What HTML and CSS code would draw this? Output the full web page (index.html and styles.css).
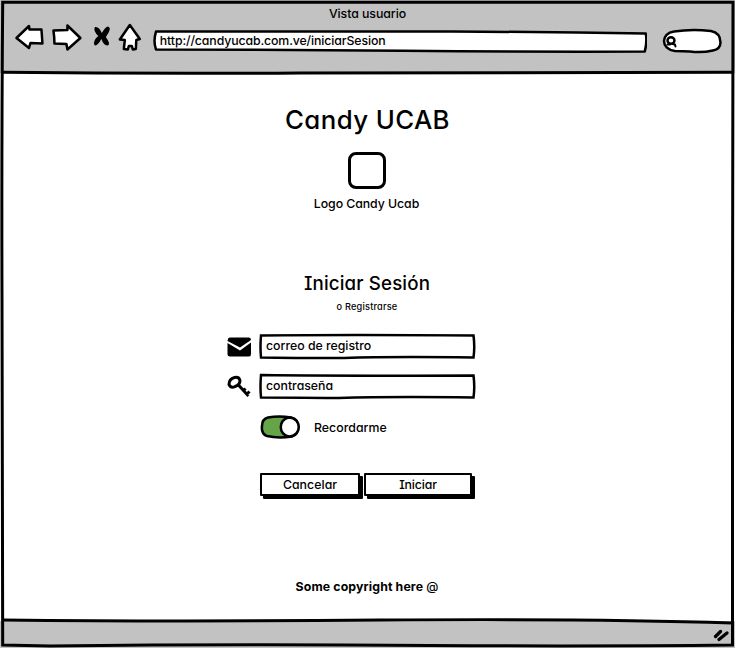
FILE: index.html
```html
<!DOCTYPE html>
<html lang="es">
<head>
<meta charset="utf-8">
<title>Vista usuario</title>
<link rel="stylesheet" href="styles.css">
</head>
<body>
<div class="window">
  <header class="chrome">
    <div class="window-title"><span class="t-window">Vista usuario</span></div>
    <div class="toolbar">
      <svg class="nav" viewBox="0 0 133 32" width="133" height="32">
        <g class="line paper">
          <path d="M1.500 16 L14 4 L14.500 7.500 L26.500 7.500 L27.500 21.500 L15.500 21 L14 26Z"/>
          <path d="M38.500 8.500 L52.500 8 L52.500 3.500 L65.500 16 L52.500 27.500 L51.500 22 L39.500 21.500 Q39.500 15 38.500 8.500Z"/>
          <path d="M115 3 L125 17 L121.500 18 L121 27 L118 27.500 L117 24 L114 24 L113 27.500 L109 27 L110 18 L105 17.500Z"/>
        </g>
        <path d="M80 5 Q84 4 87 11 Q92 3 94 5 Q97 7 91 15 Q96 22 93 23.500 Q89 24 86.500 17 Q82 25 79.500 23 Q78 18 83.500 14 Q78 9 80 5Z"/>
      </svg>
      <div class="address">
        <svg class="sketch" viewBox="0 0 495 23"><path class="line paper" d="M3 1.500 Q180 2 300 1.500 Q400 2 493.500 3.500 Q495 12 492.500 21.500 Q390 22 250 20.800 Q120 19.500 3 19.500 Q0 11 3 1.500Z"/></svg>
        <span class="t-url">http://candyucab.com.ve/iniciarSesion</span>
      </div>
      <svg class="search" viewBox="0 0 62 27" width="62" height="27">
        <path class="line paper" d="M12 4.500 Q30 1.500 49 4 Q58.500 6 58.500 15 Q59 22 51 23.500 Q40 26 28 24.500 L13 24 C-2 22 -1 6 12 4.500Z"/>
        <ellipse class="line" cx="9" cy="13.500" rx="3.500" ry="3.200"/><path class="line thin" d="M5.500 17.500 L8 17.500 M10.500 17 L13 17.500 L13.500 19.500"/>
      </svg>
    </div>
  </header>
  <main class="page">
    <h1><span class="t-title">Candy UCAB</span></h1>
    <div class="logo"></div>
    <p class="logo-name"><span class="t-logo">Logo Candy Ucab</span></p>
    <h2><span class="t-login">Iniciar Sesión</span></h2>
    <p class="register"><span class="t-register">o Registrarse</span></p>
    <form class="form">
      <div class="row">
        <svg viewBox="0 0 25 20" width="25" height="20"><path d="M1 2 Q1 .5 3 .5 H22 Q24 .5 24 3 L13 10.500 L.5 4Z M.5 6 L13 13.500 L24 5.500 V17 Q24 19.500 22 19.500 H3 Q.5 19.500 .5 17Z"/></svg>
        <div class="field">
          <svg class="sketch" viewBox="0 0 217 27"><path class="line sharp paper" d="M2 2.500 Q90 1.500 214.500 2.500 Q216 14 214.500 24.500 Q130 23.500 85 25 Q30 25 2 24.500 Q1 14 2 2.500Z"/></svg>
          <span>correo de registro</span>
        </div>
      </div>
      <div class="row">
        <svg viewBox="0 0 25 24" width="25" height="24"><path class="key" d="M7.500 2.500 Q12 1.500 13 5.500 Q13 10 8 11.500 Q4 13.500 2 9.500 Q2 4 7.500 2.500Z M11 9.500 L21.500 21 M15.500 16.500 L18.500 13.500 M19 20 L22.500 16.500"/></svg>
        <div class="field">
          <svg class="sketch" viewBox="0 0 217 27"><path class="line sharp paper" d="M2 2 Q90 3 214.500 2.500 Q216 14 214.500 24.500 Q130 23.500 80 25 Q30 24.500 2 24.500 Q1 14 2 2Z"/></svg>
          <span>contraseña</span>
        </div>
      </div>
      <div class="remember">
        <svg viewBox="0 0 40 24" width="40" height="24"><path class="line green" d="M8 2.500 Q19 .5 31 2.500 Q38 4 38.500 12 Q38 20 32 21.500 Q18 23.500 7 21 Q1 19 2 11 Q2 4 8 2.500Z"/><path class="line paper" d="M29 2.500 C18 4 18 20 29 21.500 C42 21 42 3 29 2.500Z"/></svg>
        <span class="t-remember">Recordarme</span>
      </div>
      <div class="actions">
        <div class="button cancel"><span class="t-remember">Cancelar</span></div>
        <div class="button submit"><span class="t-submit">Iniciar</span></div>
      </div>
    </form>
    <p class="copyright"><span>Some copyright here <span class="at">@</span></span></p>
  </main>
  <footer class="status">
    <svg viewBox="0 0 18 16" width="18" height="16"><path class="grip" d="M4.500 10.500 L9.500 5.500 M8 13.500 L16 7"/></svg>
  </footer>
  <svg class="frame" viewBox="0 0 735 648">
    <path class="line wide sharp" d="M2.700 2.300 H733 Q732 180 732.500 340 Q733 500 732.500 645 Q600 646.500 430 645.500 Q230 644 50 646 L2.700 645 Q3 500 2 300 Q1.500 140 2.700 2.300Z"/>
    <path class="line wide butt" d="M3 72.300 Q150 74 300 73 T732 72.300 M3 620 Q180 622 380 620 Q600 618.500 732 623"/>
  </svg>
</div>
</body>
</html>
```
FILE: styles.css
```css
* { box-sizing: border-box; }
body {
  margin: 0;
  background: #fff;
  color: #000;
  font: 450 12.3px/18px Inter, "Liberation Sans", sans-serif;
  font-feature-settings: "cv11", "cv08";
}
h1, h2, p { margin: 0; font-weight: 450; text-align: center; }
svg { display: block; }
span { white-space: nowrap; }

.window {
  position: relative;
  width: 735px;
  height: 648px;
  display: flex;
  flex-direction: column;
  overflow: hidden;
}
.frame, .sketch { position: absolute; inset: 0; width: 100%; height: 100%; }
.line { fill: none; stroke: #000; stroke-width: 2.5; stroke-linejoin: round; stroke-linecap: round; }
.sharp { stroke-linejoin: miter; }
.wide { stroke-width: 3; }
.butt { stroke-linecap: butt; }
.thin { stroke-width: 2; }
.paper { fill: #fff; }
.green { fill: #65a548; }
.key { fill: none; stroke: #000; stroke-width: 3; stroke-linejoin: round; }
.grip { fill: none; stroke: #000; stroke-width: 3.2; stroke-linecap: round; }

.chrome { height: 73px; padding: 5px 11px 0 15px; background: #c2c2c2; }
.window-title { height: 17px; padding-right: 4px; text-align: center; }
.toolbar { display: flex; align-items: flex-start; }
.nav { margin-right: 5px; }
.address { position: relative; width: 495px; height: 23px; margin-top: 8px; padding: 2px 7px; }
.address span { position: relative; }
.search { margin: 5px 0 0 15px; }

.page { height: 548px; padding-top: 29px; display: flex; flex-direction: column; align-items: center; }
h1 { font-size: 25.8px; line-height: 36px; }
.logo { width: 38px; height: 37px; margin: 14px 2px 6px 0; border: 3px solid #000; border-radius: 8px; }
.logo-name { padding-right: 2px; }
h2 { margin-top: 58px; padding-right: 1px; font-size: 18.7px; line-height: 26px; }
.register { margin-top: 4px; padding-right: 1px; font-size: 9.2px; line-height: 12px; }

.form { width: 249px; margin: 20px 32px 0 0; }
.row { display: grid; grid-template-columns: 24px 217px; column-gap: 8px; align-items: center; height: 27px; margin-bottom: 13px; }
.field { position: relative; height: 27px; padding: 4px 7px; }
.field span { position: relative; }
.remember { display: flex; align-items: center; gap: 14px; height: 24px; margin: 15px 0 0 33px; }
.remember span { padding-top: 1px; }
.actions { display: flex; gap: 4px; margin: 34px 0 0 33px; }
.button {
  height: 23px;
  border: 2px solid #000;
  border-radius: 1px;
  background: #fff;
  box-shadow: 3px 3px 0 #000;
  text-align: center;
  line-height: 19px;
}
.cancel { width: 100px; }
.submit { width: 108px; }
.copyright { margin-top: 82px; padding-right: 1px; font-weight: 700; letter-spacing: .13px; }
.at { font-weight: 500; }

.status { flex: 1; padding: 5px 0 0 711px; background: #c2c2c2; }

.t-window, .t-logo { letter-spacing: -.05px; }
.t-url { letter-spacing: -.11px; }
.t-title { letter-spacing: .4px; }
.t-login { letter-spacing: .15px; }
.t-register { letter-spacing: .2px; }
.t-remember { letter-spacing: .05px; }
.t-submit { letter-spacing: -.15px; }
```
